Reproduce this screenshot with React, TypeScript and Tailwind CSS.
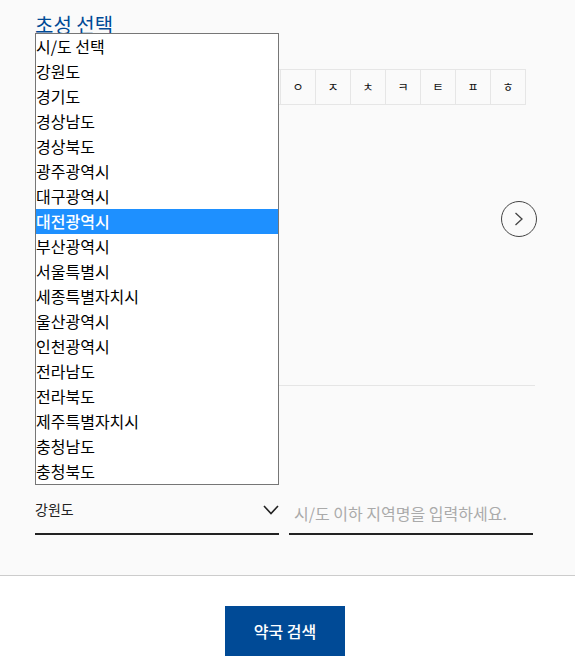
const consonants = ["ㄱ", "ㄴ", "ㄷ", "ㄹ", "ㅁ", "ㅂ", "ㅅ", "ㅇ", "ㅈ", "ㅊ", "ㅋ", "ㅌ", "ㅍ", "ㅎ"];

const regions = [
  "시/도 선택",
  "강원도",
  "경기도",
  "경상남도",
  "경상북도",
  "광주광역시",
  "대구광역시",
  "대전광역시",
  "부산광역시",
  "서울특별시",
  "세종특별자치시",
  "울산광역시",
  "인천광역시",
  "전라남도",
  "전라북도",
  "제주특별자치시",
  "충청남도",
  "충청북도",
];

export default function App() {
  return (
    <div className="relative h-[669px] w-[582px] overflow-hidden bg-white font-['Noto_Sans_CJK_KR','Noto_Sans',sans-serif] text-[#222]">
      <main className="h-[576px] w-[575px] border-b border-[#cccccc] bg-[#fafafa] pl-[35px]">
        <h2 className="pt-[11px] text-[20px] leading-[28px] font-normal text-[#004a96]">초성 선택</h2>

        <ul className="mt-[30px] flex h-[36px] w-[491px]">
          {consonants.map((c) => (
            <li
              key={c}
              className="flex w-[35px] items-center justify-center border-y border-l border-[#e6e6e6] text-[12px] text-[#111] last:w-[36px] last:border-r"
            >
              {c}
            </li>
          ))}
        </ul>

        <div className="flex h-[280px] w-[502px] justify-end pt-[96px]">
          <button className="flex h-[36px] w-[36px] items-center justify-center rounded-full border border-[#444]" aria-label="다음">
            <svg width="12" height="16" viewBox="0 0 12 16" fill="none" stroke="#444" strokeWidth="1.3">
              <path d="M2.5 2 L9 8 L2.5 14" />
            </svg>
          </button>
        </div>

        <div className="h-px w-[500px] bg-[#e5e5e5]" />

        <div className="mt-[107px] flex w-[498px] gap-[10px]">
          <div className="relative h-[42px] w-[244px] border-b-2 border-[#222] text-[14px]">
            <span className="absolute top-[5px] left-0 leading-[22px]">강원도</span>
            <svg className="absolute top-[12px] right-0" width="16" height="10" viewBox="0 0 16 10" fill="none" stroke="#222" strokeWidth="1.6">
              <path d="M1 1 L8 8.5 L15 1" />
            </svg>
          </div>
          <div className="flex h-[42px] w-[244px] items-start border-b-2 border-[#222] pt-[8px] pl-[5px] text-[16px] leading-[24px] text-[#aaaaaa]">
            시/도 이하 지역명을 입력하세요.
          </div>
        </div>
      </main>

      <div className="flex w-[570px] justify-center pt-[30px]">
        <button className="h-[50px] w-[120px] bg-[#004a96] text-[16px] font-medium text-white">약국 검색</button>
      </div>

      <ul className="absolute top-[33px] left-[35px] w-[244px] border border-[#767676] bg-white text-[16px] text-black">
        {regions.map((r) => (
          <li
            key={r}
            className={
              r === "대전광역시"
                ? "h-[25px] bg-[#1e90ff] leading-[25px] font-medium whitespace-nowrap text-white"
                : "h-[25px] leading-[25px] whitespace-nowrap"
            }
          >
            {r}
          </li>
        ))}
      </ul>
    </div>
  );
}
